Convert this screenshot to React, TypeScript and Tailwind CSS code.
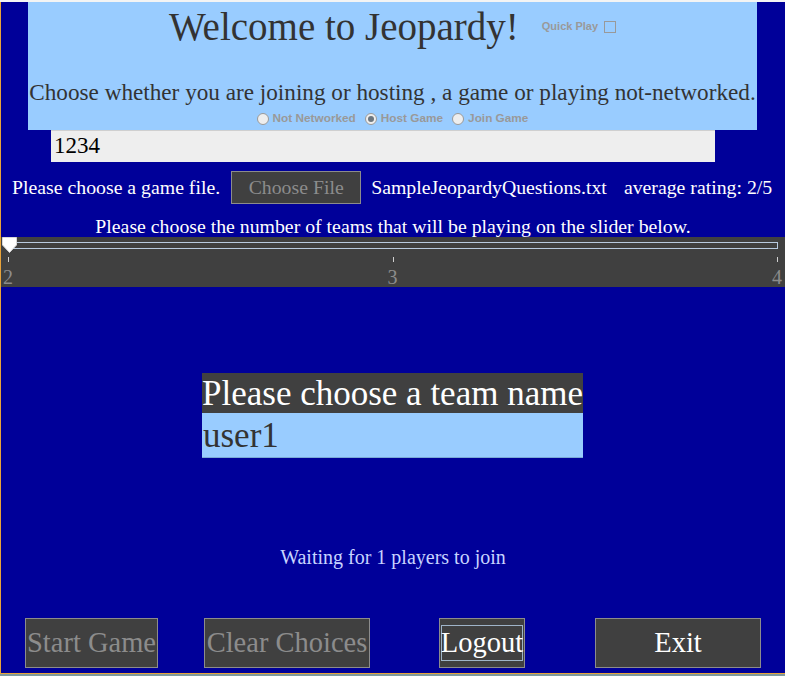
export default function App() {
  const serif = "font-['Liberation_Serif','Times_New_Roman',serif]";
  const sans = "font-['Liberation_Sans',Arial,sans-serif]";

  // radio options for the network mode
  const modes = [
    { label: 'Not Networked', checked: false },
    { label: 'Host Game', checked: true },
    { label: 'Join Game', checked: false },
  ];

  return (
    <div className={`w-[785px] h-[676px] flex flex-col overflow-hidden ${serif}`}>
      <div className="h-[2px] bg-[#f4f4f4]"></div>

      <div className="flex-1 flex flex-col bg-[#000099] border-l border-[#e8a33a]">
        {/* TOP PANEL */}
        <div className="ml-[27px] w-[729px] h-[128px] bg-[#99ccff] flex flex-col items-center">
          <div className="flex items-center gap-[23px] h-[46px] pt-[3px]">
            <h1 className="text-[39px] leading-[43px] text-[#333333] whitespace-nowrap">Welcome to Jeopardy!</h1>
            <label className={`flex items-center gap-[6px] text-[11px] font-bold text-[#999999] ${sans}`}>
              Quick Play
              <span className="w-[12px] h-[12px] border border-[#999999] bg-[#99ccff]"></span>
            </label>
          </div>
          <p className="mt-[31px] text-[23.2px] leading-[26px] text-[#333333] whitespace-nowrap">
            Choose whether you are joining or hosting , a game or playing not-networked.
          </p>
          <div className={`flex items-center gap-[9px] mt-[5px] text-[11.8px] font-bold text-[#999999] ${sans}`}>
            {modes.map((m) => (
              <div key={m.label} className="flex items-center gap-[4px]">
                <span className="w-[12px] h-[12px] rounded-full border border-[#9a9a9a] bg-[#eeeeee] flex items-center justify-center">
                  {m.checked && <span className="w-[6px] h-[6px] rounded-full bg-[#6b7680]"></span>}
                </span>
                {m.label}
              </div>
            ))}
          </div>
        </div>

        {/* PORT / ADDRESS INPUT */}
        <div className="ml-[50px] w-[664px] h-[32px] bg-[#eeeeee] border-t border-[#cfcfcf] flex items-center px-[3px] text-[23px] text-black">
          1234
        </div>

        {/* FILE ROW */}
        <div className="flex items-center h-[33px] mt-[9px] text-white text-[19.8px] whitespace-nowrap">
          <span className="ml-[11px]">Please choose a game file.</span>
          <button className="ml-[11px] w-[130px] h-[33px] bg-[#404040] border border-[#8c8c8c] text-[#8c8c8c] text-[19.8px]">
            Choose File
          </button>
          <span className="ml-[10px]">SampleJeopardyQuestions.txt</span>
          <span className="ml-[17px]">average rating: 2/5</span>
        </div>

        <p className="mt-[7px] h-[26px] text-center text-white text-[19.8px] leading-[30px] whitespace-nowrap">
          Please choose the number of teams that will be playing on the slider below.
        </p>

        {/* SLIDER */}
        <div className="h-[50px] bg-[#404040] relative">
          <div className="absolute left-[7px] right-[7px] top-[5px] h-[7px] border border-[#b9cbe0]"></div>
          <svg className="absolute left-[1px] top-0" width="15" height="16" viewBox="0 0 15 16">
            <path d="M0.5 0.5 H14.5 V8 L7.5 15.5 L0.5 8 Z" fill="#ffffff" stroke="#d8d8d8" />
          </svg>
          <div className="absolute left-[7px] right-[7px] top-[20px] flex justify-between">
            {[0, 1, 2].map((i) => (
              <span key={i} className="w-[1px] h-[5px] bg-[#d0d0d0]"></span>
            ))}
          </div>
          <div className="absolute left-[2px] right-[3px] top-[30px] flex justify-between text-[20px] leading-[20px] text-[#8c8c8c]">
            <span>2</span>
            <span>3</span>
            <span>4</span>
          </div>
        </div>

        {/* TEAM NAME */}
        <div className="mt-[86px] ml-[201px] w-[381px] flex flex-col">
          <div className="h-[40px] bg-[#404040] text-white text-[35px] leading-[42px] whitespace-nowrap overflow-hidden">
            Please choose a team name
          </div>
          <div className="h-[45px] bg-[#99ccff] border-b border-[#7aa9d6] text-[#333333] text-[35px] leading-[45px] px-[1px]">
            user1
          </div>
        </div>

        <p className="mt-[88px] text-center text-[#c8d4ff] text-[20px] leading-[22px]">Waiting for 1 players to join</p>

        {/* BOTTOM BUTTONS */}
        <div className="mt-[50px] flex items-center text-[28.5px]">
          <button className="ml-[24px] w-[133px] h-[50px] bg-[#404040] border border-[#8c8c8c] text-[#8c8c8c] whitespace-nowrap">
            Start Game
          </button>
          <button className="ml-[46px] w-[166px] h-[50px] bg-[#404040] border border-[#8c8c8c] text-[#8c8c8c] whitespace-nowrap">
            Clear Choices
          </button>
          <button className="ml-[69px] w-[86px] h-[50px] bg-[#404040] border border-[#8c8c8c] text-white px-[1px] py-[6px]">
            <span className="flex items-center justify-center w-full h-full border border-[#9fb4c8]">Logout</span>
          </button>
          <button className="ml-[70px] w-[166px] h-[50px] bg-[#404040] border border-[#8c8c8c] text-white">
            Exit
          </button>
        </div>
        <div className="flex-1"></div>
      </div>

      <div className="h-[1px] bg-[#e8a33a]"></div>
      <div className="h-[2px] bg-[#7f9a9c]"></div>
    </div>
  );
}
